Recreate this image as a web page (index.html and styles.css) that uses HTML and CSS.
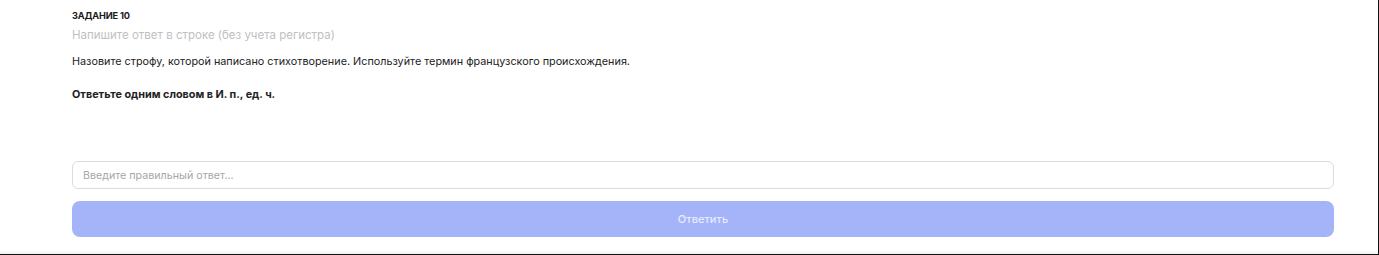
FILE: index.html
```html
<!DOCTYPE html>
<html lang="ru">
<head>
<meta charset="utf-8">
<link rel="stylesheet" href="styles.css">
</head>
<body>
<div class="frame">
  <section class="task">
    <div class="task-title">ЗАДАНИЕ 10</div>
    <div class="task-hint">Напишите ответ в строке (без учета регистра)</div>
    <p class="task-text">Назовите строфу, которой написано стихотворение. Используйте термин французского происхождения.</p>
    <p class="task-note">Ответьте одним словом в И. п., ед. ч.</p>
    <form class="answer">
      <input class="answer-input" type="text" placeholder="Введите правильный ответ...">
      <button class="answer-btn" type="button">Ответить</button>
    </form>
  </section>
  <div class="shade"></div>
</div>
</body>
</html>
```
FILE: styles.css
```css
* { box-sizing: border-box; }
html, body { margin: 0; padding: 0; background: #fff; }
body { font-family: Inter, "Noto Sans", sans-serif; color: #1c1c1f; }
.frame {
  width: 1379px;
  height: 255px;
  border-right: 1px solid #111;
  border-bottom: 1px solid #111;
  display: flex;
  flex-direction: column;
}
.task {
  flex: 1;
  padding: 10px 44px 0 72px;
}
.task-title {
  font-size: 9.2px;
  font-weight: 700;
  letter-spacing: -0.15px;
  line-height: 12px;
  color: #1a1a1a;
}
.task-hint {
  margin-top: 6px;
  font-size: 11.5px;
  line-height: 14px;
  color: #c0c0c4;
}
.task-text {
  margin: 13px 0 0;
  font-size: 10.8px;
  line-height: 13px;
  color: #222;
}
.task-note {
  margin: 20px 0 0;
  font-size: 10.8px;
  font-weight: 700;
  line-height: 13px;
  letter-spacing: 0;
  color: #222;
}
.answer {
  margin: 60px 0 0;
  display: flex;
  flex-direction: column;
  gap: 12px;
}
.answer-input {
  width: 100%;
  height: 28px;
  border: 1px solid #dcdcdf;
  border-radius: 6px;
  padding: 0 10px;
  font-family: inherit;
  font-size: 10.7px;
  color: #333;
  outline: none;
  background: #fff;
}
.answer-input::placeholder { color: #a6a6aa; }
.answer-btn {
  width: 100%;
  height: 36px;
  border: none;
  border-radius: 8px;
  background: #a5b4f9;
  color: #e6ebff;
  font-family: inherit;
  font-size: 11px;
  font-weight: 500;
}
.shade {
  height: 4px;
  background: linear-gradient(#fff, #efefef);
}
```
